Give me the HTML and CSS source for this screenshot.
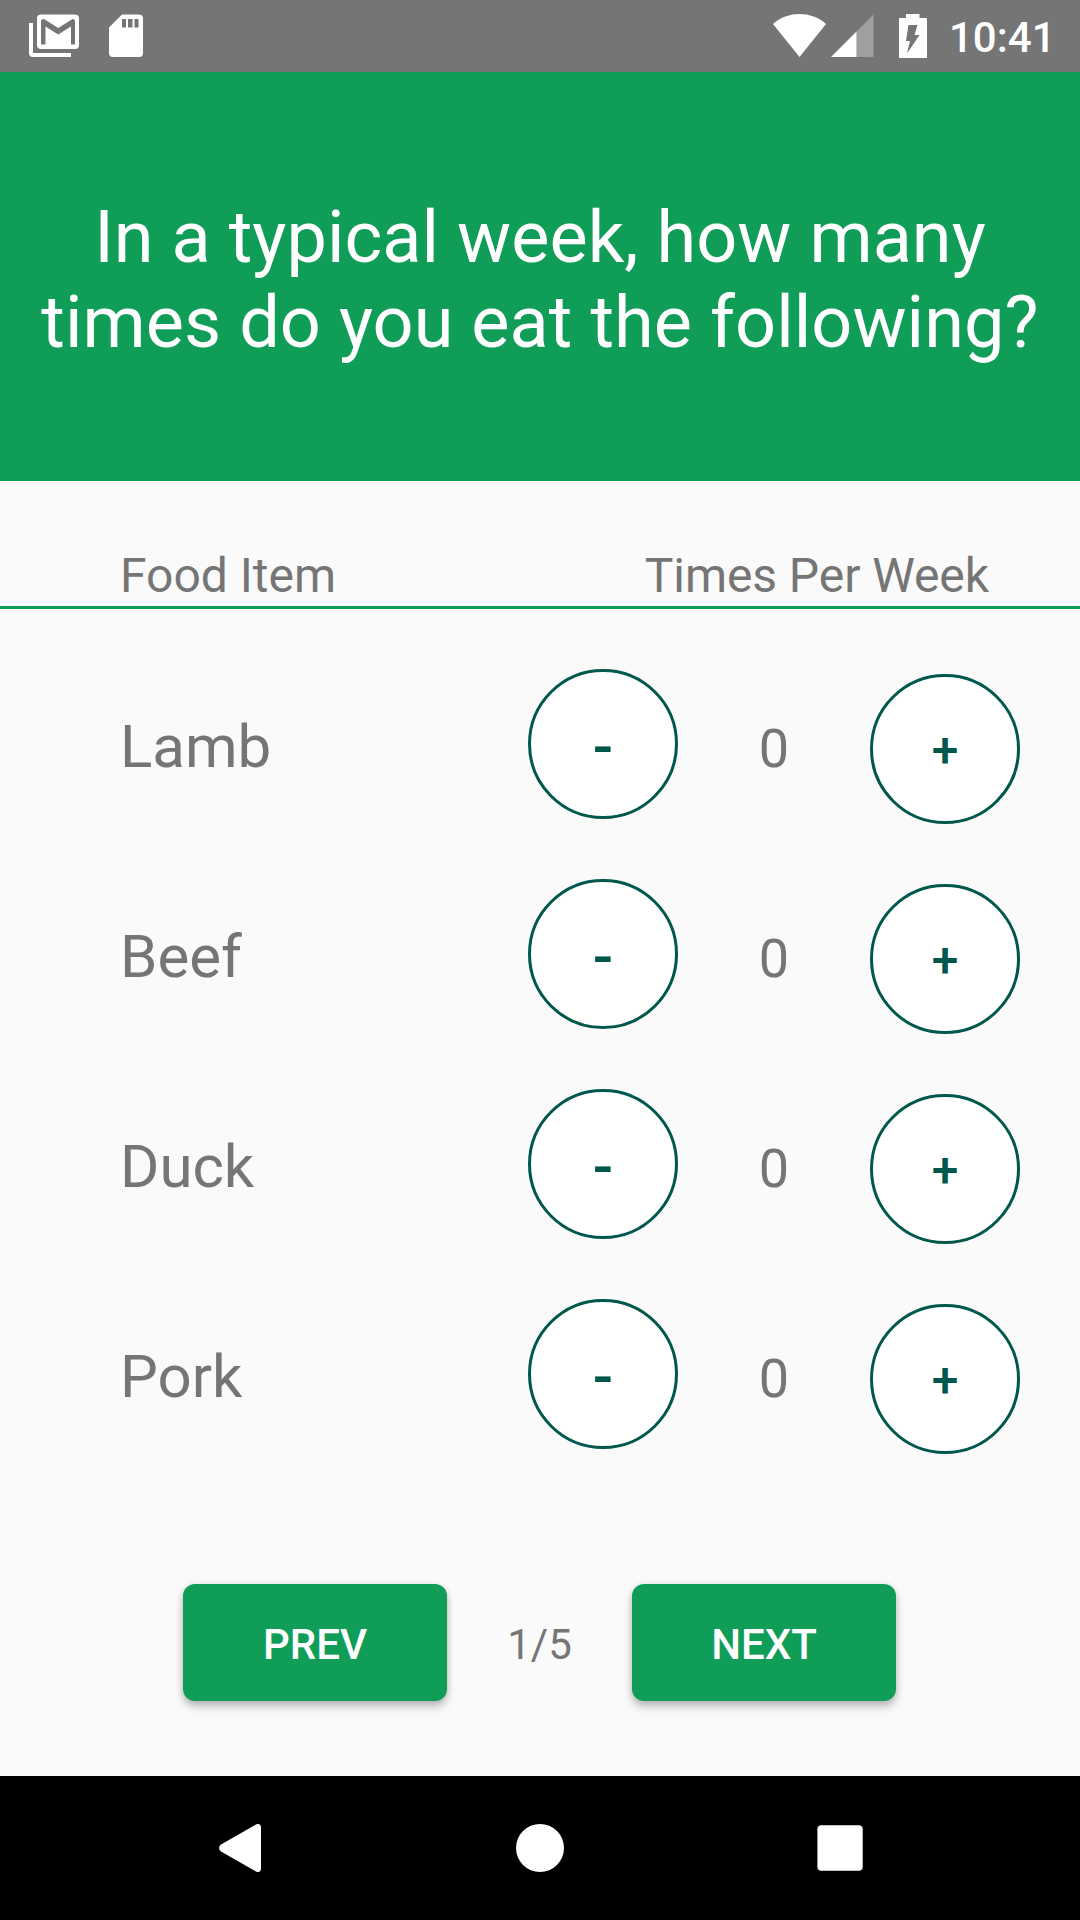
FILE: index.html
```html
<!DOCTYPE html>
<html lang="en">
<head>
<meta charset="utf-8">
<title>Food frequency</title>
<link rel="stylesheet" href="styles.css">
</head>
<body>
<div class="screen">
  <div class="status">
    <svg class="mail" width="50" height="44" viewBox="0 0 50 44">
      <path fill="#fff" d="M0 9h4v30h38v4H4a4 4 0 0 1-4-4z"/>
      <rect x="8" y="0.5" width="42" height="34.5" rx="4" fill="#fff"/>
      <path fill="#757575" d="M12 30.500V7.500Q12 4.500 15 5L29.200 14L43.500 5Q46 4.500 46 7.500V30.500H42V12.500L29.200 20.500L16.500 12.500V30.500z"/>
    </svg>
    <svg class="sd" width="34" height="44" viewBox="0 0 34 44">
      <path fill="#fff" d="M13 .5H30a4 4 0 0 1 4 4V39a4 4 0 0 1-4 4H4a4 4 0 0 1-4-4V13.500z"/>
      <path fill="#757575" d="M13 5h4v8.500h-4zM19 5h4.500v8.500H19zM25.500 5h4v8.500h-4z"/>
    </svg>
    <svg class="wifi" width="53" height="44" viewBox="0 0 53 44">
      <path fill="#fff" d="M0 10C15-3.200 38-3.200 53 10L26.500 43z"/>
    </svg>
    <svg class="signal" width="43" height="44" viewBox="0 0 43 44">
      <path fill="#9f9f9f" d="M42.500 .5V43H25.500V17.500z"/>
      <path fill="#fff" d="M0 43H25.500V17.500z"/>
    </svg>
    <svg class="battery" width="28" height="44" viewBox="0 0 28 44">
      <path fill="#fff" d="M7 0H20.500V4H27a1 1 0 0 1 1 1V44H0V5A1 1 0 0 1 1 4H7z"/>
      <path fill="#757575" d="M9.500 11H18.500L15.500 21H20.500L8 39.500L11 27H7z"/>
    </svg>
    <span class="time">10:41</span>
  </div>

  <h1 class="question">In a typical week, how many<br>times do you eat the following?</h1>

  <div class="columns"><span>Food Item</span><span class="times">Times Per Week</span></div>

  <div class="list">
    <div class="row"><span class="name">Lamb</span><button class="step minus">-</button><span class="count">0</span><button class="step plus">+</button></div>
    <div class="row"><span class="name">Beef</span><button class="step minus">-</button><span class="count">0</span><button class="step plus">+</button></div>
    <div class="row"><span class="name">Duck</span><button class="step minus">-</button><span class="count">0</span><button class="step plus">+</button></div>
    <div class="row"><span class="name">Pork</span><button class="step minus">-</button><span class="count">0</span><button class="step plus">+</button></div>
  </div>

  <div class="pager"><button class="page-btn">PREV</button><span class="page">1/5</span><button class="page-btn">NEXT</button></div>

  <div class="nav">
    <svg width="48" height="48" viewBox="0 0 48 48"><path fill="#fff" d="M40.500 .3Q45 -1 45 4V44Q45 49 40.500 47.700L5 27.500Q1 24 5 20.500z"/></svg>
    <svg width="48" height="48" viewBox="0 0 48 48"><circle cx="24" cy="24" r="24" fill="#fff"/></svg>
    <svg width="48" height="48" viewBox="0 0 48 48"><rect x="1.400" y="1.300" width="45.300" height="45.400" rx="4" fill="#fff"/></svg>
  </div>
</div>
</body>
</html>
```
FILE: styles.css
```css
* { box-sizing: border-box; }
body { margin: 0; }
.screen {
  display: flex;
  flex-direction: column;
  width: 1080px;
  height: 1920px;
  background: #fafafa;
  color: #757575;
  font-family: Roboto, sans-serif;
  white-space: nowrap;
}
button { border: 0; padding: 0; font-family: inherit; }

.status {
  display: flex;
  align-items: flex-start;
  height: 72px;
  padding: 14px 30px 0 29px;
  background: #757575;
  color: #fff;
}
.sd { margin-left: 30px; }
.wifi { margin-left: auto; }
.signal { margin-left: 5px; }
.battery { margin-left: 25px; }
.time {
  width: 101px;
  margin-left: 22px;
  font-size: 42px;
  font-weight: 500;
  line-height: 47px;
}

.question {
  height: 409px;
  margin: 0;
  padding-top: 123px;
  background: #0f9d58;
  color: #fff;
  font-size: 72px;
  font-weight: 400;
  line-height: 85px;
  letter-spacing: .07px;
  text-align: center;
}

.columns {
  display: flex;
  justify-content: space-between;
  height: 128px;
  padding: 66px 91px 0 120px;
  border-bottom: 3px solid #0f9d58;
  font-size: 48px;
  line-height: 57px;
}
.times { letter-spacing: -.07px; }

.list { padding-top: 60px; }
.row {
  display: grid;
  grid-template-columns: 408px 150px 192px 150px;
  align-items: start;
  height: 210px;
  padding-left: 120px;
}
.name { font-size: 60px; line-height: 155px; }
.count { font-size: 54px; line-height: 159px; text-align: center; }
.step {
  width: 150px;
  height: 150px;
  border: 3px solid #00574b;
  border-radius: 50%;
  background: #fff;
  color: #00574b;
  font-weight: 500;
}
.minus { padding-top: 5px; font-size: 60px; line-height: 71px; }
.plus { margin-top: 5px; padding-top: 3px; font-size: 48px; line-height: 57px; }

.pager {
  display: flex;
  height: 117px;
  margin-top: 75px;
  padding-left: 183px;
}
.page-btn {
  width: 264px;
  height: 117px;
  padding-top: 4px;
  border-radius: 12px;
  background: #0f9d58;
  color: #fff;
  font-size: 42px;
  font-weight: 500;
  line-height: 49px;
  box-shadow: 0 6px 8px rgba(0, 0, 0, .22), 0 1px 6px rgba(0, 0, 0, .12);
}
.page { width: 185px; font-size: 42px; line-height: 121px; text-align: center; }

.nav {
  display: flex;
  justify-content: space-between;
  align-items: center;
  height: 144px;
  margin-top: auto;
  padding: 0 216px;
  background: #000;
}
```
